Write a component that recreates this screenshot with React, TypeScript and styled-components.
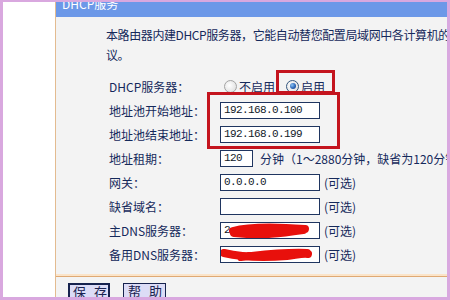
import React from 'react';
import styled, { createGlobalStyle, css } from 'styled-components';

const navy = '#15295b';
const cjk = '"Noto Sans CJK SC", "Liberation Sans", sans-serif';

const GlobalStyle = createGlobalStyle`
  html, body {
    margin: 0;
    padding: 0;
    background: #ffffff;
  }
  body {
    font-family: ${cjk};
    font-size: 12px;
  }
`;

const Frame = styled.div`
  box-sizing: border-box;
  width: 450px;
  height: 300px;
  border-style: solid;
  border-color: #d9a8df;
  border-width: 2px 3px 3px 3px;
  background: #ffffff;
  display: flex;
  overflow: hidden;
`;

const Gutter = styled.div`
  width: 52px;
  flex: none;
  background: #ffffff;
`;

const Panel = styled.div`
  flex: 1;
  min-width: 0;
  display: flex;
  flex-direction: column;
  border-left: 1px solid #e3bb90;
  background: #f3f3f3;
  overflow: hidden;
  color: ${navy};
`;

const Header = styled.div`
  height: 15px;
  flex: none;
  background: #6c98e8;
  padding-left: 6px;
  overflow: hidden;
`;

const HeaderTitle = styled.div`
  color: #ffffff;
  line-height: 12px;
  margin-top: -4px;
  white-space: nowrap;
`;

const Intro = styled.p`
  margin: 8px 0 0;
  padding-left: 50px;
  line-height: 20px;
  letter-spacing: -0.4px;
  white-space: nowrap;
`;

const Form = styled.div`
  position: relative;
  margin-top: 9px;
  padding-left: 53px;
  display: grid;
  grid-template-columns: 111px auto;
  grid-auto-rows: 24px;
  align-items: center;
`;

const Label = styled.div`
  white-space: nowrap;
`;

const Field = styled.div`
  display: flex;
  align-items: center;
  white-space: nowrap;
`;

const InputBox = styled.div<{ $w: number; $mono?: boolean }>`
  position: relative;
  box-sizing: border-box;
  width: ${(p) => p.$w}px;
  height: 17px;
  border: 1px solid #1f3560;
  background: #ffffff;
  padding-left: 3px;
  line-height: 15px;
  color: #101828;
  overflow: hidden;
  ${(p) =>
    p.$mono &&
    css`
      font-family: 'Liberation Mono', monospace;
      font-size: 11px;
      letter-spacing: -0.6px;
    `}
`;

const Note = styled.span<{ $gap: number }>`
  margin-left: ${(p) => p.$gap}px;
`;

const RadioGroup = styled.div`
  display: flex;
  align-items: center;
  padding-left: 4px;
`;

const Radio = styled.span<{ $checked?: boolean }>`
  box-sizing: border-box;
  width: 13px;
  height: 13px;
  border-radius: 50%;
  border: 1px solid ${(p) => (p.$checked ? '#35577f' : '#a4a4a4')};
  background: radial-gradient(circle at 40% 40%, #ffffff 0%, #e4e4e4 70%, #cfcfcf 100%);
  display: grid;
  place-items: center;
  &::after {
    content: '';
    display: ${(p) => (p.$checked ? 'block' : 'none')};
    width: 6px;
    height: 6px;
    border-radius: 50%;
    background: radial-gradient(circle at 35% 35%, #8cc4f4 0%, #2c66b8 55%, #163c78 100%);
  }
`;

const RadioText = styled.span<{ $gap: number }>`
  margin-left: 2px;
  margin-right: ${(p) => p.$gap}px;
`;

const Marker = styled.div<{ $x: number; $y: number; $w: number; $h: number }>`
  position: absolute;
  box-sizing: border-box;
  left: ${(p) => p.$x}px;
  top: ${(p) => p.$y}px;
  width: ${(p) => p.$w}px;
  height: ${(p) => p.$h}px;
  border: 3px solid #c4141e;
  pointer-events: none;
`;

const Scribble = styled.svg`
  position: absolute;
  left: 0;
  top: 0;
`;

const Footer = styled.div`
  margin-top: 10px;
  border-top: 1px solid #dfa974;
  box-shadow: 0 -2px 0 #fbe4c9;
  padding: 6px 0 0 12px;
  display: flex;
  gap: 13px;
`;

const Button = styled.div<{ $primary?: boolean }>`
  box-sizing: border-box;
  width: ${(p) => (p.$primary ? 42 : 43)}px;
  height: 18px;
  border: ${(p) => (p.$primary ? 2 : 1)}px solid #16224e;
  background: #dcdcf6;
  color: #1a2250;
  font-size: 13px;
  line-height: 14px;
  letter-spacing: 8px;
  padding-left: ${(p) => (p.$primary ? 3 : 4)}px;
  white-space: nowrap;
`;

const scribble1 = 'M12 8 C30 3, 58 4, 84 6 M13 10 C40 13, 62 10, 82 7';
const scribble2 = 'M3 6 C20 10, 40 11, 66 9 C75 8, 82 6, 87 7 M20 10 C40 8, 60 5, 86 6';

const Redacted = ({ d, lead }: { d: string; lead: string }) => (
  <InputBox $w={100} $mono>
    {lead}
    <Scribble width="100" height="17" viewBox="0 0 100 17">
      <path d={d} fill="none" stroke="#e8100c" strokeWidth="8" strokeLinecap="round" />
    </Scribble>
  </InputBox>
);

export default function App() {
  return (
    <>
      <GlobalStyle />
      <Frame>
        <Gutter />
        <Panel>
          <Header>
            <HeaderTitle>DHCP服务</HeaderTitle>
          </Header>
          <Intro>
            本路由器内建DHCP服务器，它能自动替您配置局域网中各计算机的TCP/IP协
            <br />
            议。
          </Intro>
          <Form>
            <Label>DHCP服务器：</Label>
            <RadioGroup>
              <Radio />
              <RadioText $gap={11}>不启用</RadioText>
              <Radio $checked />
              <RadioText $gap={0}>启用</RadioText>
            </RadioGroup>

            <Label>地址池开始地址：</Label>
            <Field>
              <InputBox $w={100} $mono>192.168.0.100</InputBox>
            </Field>

            <Label>地址池结束地址：</Label>
            <Field>
              <InputBox $w={100} $mono>192.168.0.199</InputBox>
            </Field>

            <Label>地址租期：</Label>
            <Field>
              <InputBox $w={33} $mono>120</InputBox>
              <Note $gap={7}>分钟（1～2880分钟，缺省为120分钟）</Note>
            </Field>

            <Label>网关：</Label>
            <Field>
              <InputBox $w={100} $mono>0.0.0.0</InputBox>
              <Note $gap={4}>(可选)</Note>
            </Field>

            <Label>缺省域名：</Label>
            <Field>
              <InputBox $w={100} />
              <Note $gap={4}>(可选)</Note>
            </Field>

            <Label>主DNS服务器：</Label>
            <Field>
              <Redacted d={scribble1} lead="2" />
              <Note $gap={4}>(可选)</Note>
            </Field>

            <Label>备用DNS服务器：</Label>
            <Field>
              <Redacted d={scribble2} lead="2" />
              <Note $gap={4}>(可选)</Note>
            </Field>

            <Marker $x={220} $y={-4} $w={59} $h={24} />
            <Marker $x={151} $y={18} $w={133} $h={57} />
          </Form>
          <Footer>
            <Button $primary>保存</Button>
            <Button>帮助</Button>
          </Footer>
        </Panel>
      </Frame>
    </>
  );
}
